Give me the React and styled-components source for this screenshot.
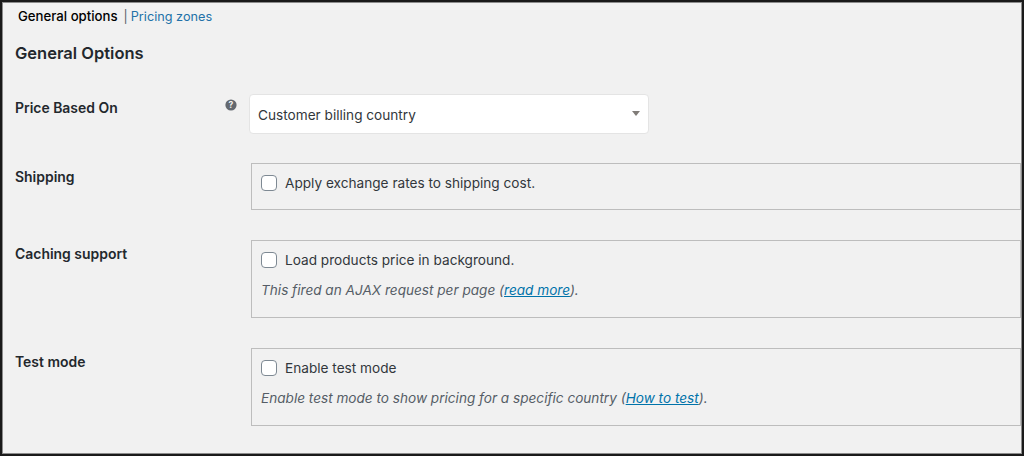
import React from 'react'
import styled, { createGlobalStyle } from 'styled-components'

const Global = createGlobalStyle`
html, body {
    margin: 0;
    padding: 0;
    background: #f1f1f1;
}
body {
    font-family: Inter, "Noto Sans", sans-serif;
}
`
const Frame = styled.div`
    box-sizing: border-box;
    width: 1024px;
    height: 456px;
    overflow: hidden;
    background: #f1f1f1;
    border: 2px solid #1a1a1a;
    box-shadow: inset 0 0 0 1px #8c8c8c;
    padding: 0 0 0 13px;
`
const Tabs = styled.div`
    display: flex;
    align-items: center;
    height: 26px;
    padding: 1px 0 0 3px;
`
const Current = styled.span`
    font-size: 13.2px;
    color: #000;
    font-weight: 500;
    margin-right: 6px;
`
const Sep = styled.span`
    font-size: 12.5px;
    color: #555d66;
    margin-right: 3px;
`
const TabLink = styled.a`
    font-size: 12.7px;
    color: #2271a8;
    text-decoration: none;
`
const Heading = styled.h2`
    margin: 12px 0 0;
    height: 24px;
    line-height: 24px;
    font-size: 16.5px;
    font-weight: 600;
    color: #23282d;
`
const Row = styled.div`
    display: grid;
    grid-template-columns: 234px 772px;
    margin-top: ${p => p.$top}px;
`
const Label = styled.div`
    position: relative;
    padding-top: 4px;
    font-size: 13.95px;
    line-height: 20px;
    font-weight: 600;
    color: #23282d;
`
const Help = styled.svg`
    position: absolute;
    top: 5px;
    right: 12px;
    width: 12px;
    height: 12px;
`
const Select = styled.div`
    box-sizing: border-box;
    display: flex;
    align-items: center;
    justify-content: space-between;
    width: 400px;
    height: 40px;
    padding: 2px 8px 0 8px;
    background: #fff;
    border: 1px solid #e4e4e4;
    border-radius: 4px;
    font-size: 13.63px;
    color: #32373c;
`
const Caret = styled.i`
    width: 0;
    height: 0;
    margin-top: -3px;
    border-style: solid;
    border-width: 5px 4px 0 4px;
    border-color: #807c78 transparent transparent transparent;
`
const Box = styled.div`
    box-sizing: border-box;
    width: 770px;
    margin-left: 2px;
    height: ${p => p.$h}px;
    padding: 9px 9px 0;
    border: 1px solid #bdbdbd;
`
const Check = styled.label`
    display: flex;
    align-items: center;
    height: 20px;
    font-size: 13.63px;
    color: #32373c;
`
const Tick = styled.input.attrs({ type: 'checkbox' })`
    appearance: none;
    box-sizing: border-box;
    width: 16px;
    height: 16px;
    margin: 0 8px 0 0;
    background: #fff;
    border: 1px solid #7e8993;
    border-radius: 4px;
`
const Note = styled.p`
    margin: 10px 0 0;
    height: 20px;
    line-height: 20px;
    font-size: 13.6px;
    font-style: italic;
    color: #555d66;
    a {
        color: #0073aa;
        text-decoration: underline;
    }
`

function App() {
    return (
        <Frame>
            <Global />
            <Tabs>
                <Current>General options</Current>
                <Sep>|</Sep>
                <TabLink href="#">Pricing zones</TabLink>
            </Tabs>
            <Heading>General Options</Heading>
            <Row $top={29}>
                <Label>
                    Price Based On
                    <Help viewBox="0 0 12 12">
                        <circle cx="6" cy="6" r="5.6" fill="#646970" />
                        <text x="6" y="9" textAnchor="middle" fontSize="8.5" fontWeight="700" fill="#f1f1f1">?</text>
                    </Help>
                </Label>
                <Select>
                    Customer billing country
                    <Caret />
                </Select>
            </Row>
            <Row $top={29}>
                <Label>Shipping</Label>
                <Box $h={47}>
                    <Check><Tick />Apply exchange rates to shipping cost.</Check>
                </Box>
            </Row>
            <Row $top={30}>
                <Label>Caching support</Label>
                <Box $h={78}>
                    <Check><Tick />Load products price in background.</Check>
                    <Note>This fired an AJAX request per page (<a href="#">read more</a>).</Note>
                </Box>
            </Row>
            <Row $top={30}>
                <Label>Test mode</Label>
                <Box $h={78}>
                    <Check><Tick />Enable test mode</Check>
                    <Note>Enable test mode to show pricing for a specific country (<a href="#">How to test</a>).</Note>
                </Box>
            </Row>
        </Frame>
    )
}

export default App
